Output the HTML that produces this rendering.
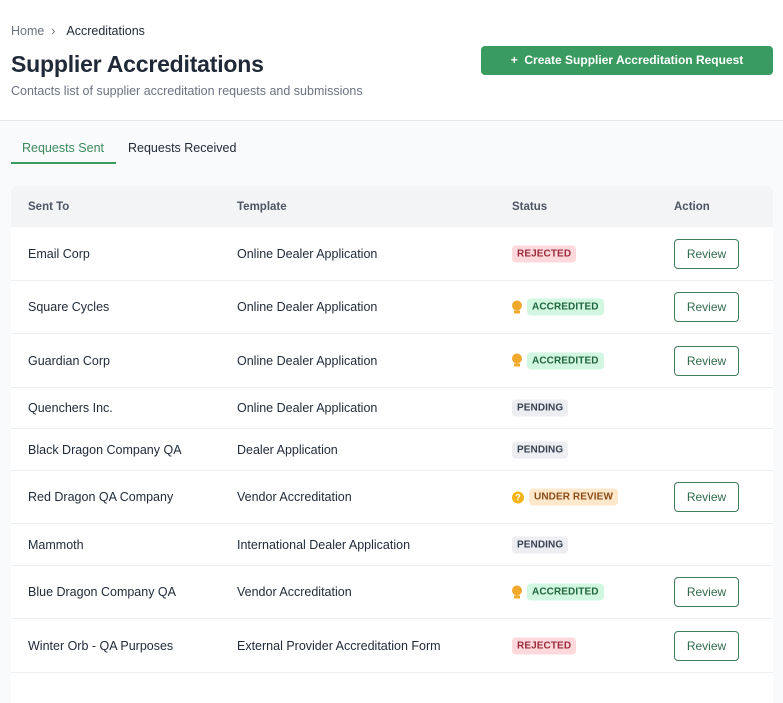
<!DOCTYPE html>
<html><head><style>
*{box-sizing:border-box;margin:0;padding:0}
body{width:783px;height:700px;overflow:hidden;background:#f9fafb;font-family:"Liberation Sans",sans-serif;color:#1f2937;position:relative}
.hdr{position:absolute;left:0;top:0;width:783px;height:121px;background:#fff;border-bottom:1px solid #e5e7eb}
.crumb{position:absolute;left:11px;top:24px;font-size:12.5px;color:#6b7280}
.crumb b{color:#1f2937;font-weight:normal;margin-left:4px}
h1{position:absolute;left:11px;top:51px;font-size:23px;font-weight:bold;color:#1f2937;letter-spacing:-0.2px}
.sub{position:absolute;left:11px;top:84px;font-size:12.5px;color:#6b7280}
.btn{position:absolute;left:481px;top:46px;width:292px;height:29px;background:#3a9b61;border-radius:4px;color:#fff;font-size:12px;font-weight:bold;line-height:29px;text-align:center}
.tab{position:absolute;top:141px;font-size:12.5px}
.ul{position:absolute;left:11px;top:162px;width:105px;height:2px;background:#3a9b61}
.tbl{position:absolute;left:11px;top:186px;width:762px;background:#fff;border-radius:6px 6px 0 0;overflow:hidden}
.row{position:relative;border-bottom:1px solid #eceef1;font-size:12.5px}
.row>div{position:absolute;top:50%;transform:translateY(-50%)}
.th{height:41px;background:#f3f4f6;font-weight:bold;font-size:11.5px;color:#4b5563;border:none}
.c1{left:17px}.c2{left:226px}.c3{left:501px;display:flex;align-items:center}.c4{left:663px}
.bd{font-size:10px;font-weight:bold;padding:3px 5px;border-radius:4px;letter-spacing:.1px}
.rej{background:#fdd8dc;color:#9b2c3b}.acc{background:#d1f7e0;color:#21643e}.pen{background:#eceef1;color:#374151}.und{background:#fde8cc;color:#8a4b14}
.rv{width:65px;height:30px;border:1px solid #3f7d5a;border-radius:4px;color:#2f6b4b;font-size:12px;text-align:center;line-height:28px}
.ic{width:10px;height:14px;margin-right:5px;position:relative}
.ic:before{content:"";position:absolute;left:0;top:0;width:10px;height:10px;border-radius:50%;background:#f0a92c}
.ic:after{content:"";position:absolute;left:2px;top:10px;width:6px;height:3px;background:#f0a92c}
.q{width:12px;height:12px;border-radius:50%;background:#f5b417;color:#fff;font-size:9px;font-weight:bold;text-align:center;line-height:12px;margin-right:5px}
</style></head><body>
<div class="hdr">
<div class="crumb">Home &nbsp;›&nbsp; <b>Accreditations</b></div>
<h1>Supplier Accreditations</h1>
<div class="sub">Contacts list of supplier accreditation requests and submissions</div>
<div class="btn">+&nbsp;&nbsp;Create Supplier Accreditation Request</div>
</div>
<div class="tab" style="left:22px;color:#3a8a5c">Requests Sent</div>
<div class="tab" style="left:128px">Requests Received</div>
<div class="ul"></div>
<div class="tbl">
<div class="row th"><div class="c1">Sent To</div><div class="c2">Template</div><div class="c3">Status</div><div class="c4">Action</div></div>
<div class="row" style="height:54px"><div class="c1">Email Corp</div><div class="c2">Online Dealer Application</div><div class="c3"><span class="bd rej">REJECTED</span></div><div class="c4 rv">Review</div></div>
<div class="row" style="height:53px"><div class="c1">Square Cycles</div><div class="c2">Online Dealer Application</div><div class="c3"><span class="ic"></span><span class="bd acc">ACCREDITED</span></div><div class="c4 rv">Review</div></div>
<div class="row" style="height:54px"><div class="c1">Guardian Corp</div><div class="c2">Online Dealer Application</div><div class="c3"><span class="ic"></span><span class="bd acc">ACCREDITED</span></div><div class="c4 rv">Review</div></div>
<div class="row" style="height:41px"><div class="c1">Quenchers Inc.</div><div class="c2">Online Dealer Application</div><div class="c3"><span class="bd pen">PENDING</span></div></div>
<div class="row" style="height:42px"><div class="c1">Black Dragon Company QA</div><div class="c2">Dealer Application</div><div class="c3"><span class="bd pen">PENDING</span></div></div>
<div class="row" style="height:53px"><div class="c1">Red Dragon QA Company</div><div class="c2">Vendor Accreditation</div><div class="c3"><span class="q">?</span><span class="bd und">UNDER REVIEW</span></div><div class="c4 rv">Review</div></div>
<div class="row" style="height:42px"><div class="c1">Mammoth</div><div class="c2">International Dealer Application</div><div class="c3"><span class="bd pen">PENDING</span></div></div>
<div class="row" style="height:53px"><div class="c1">Blue Dragon Company QA</div><div class="c2">Vendor Accreditation</div><div class="c3"><span class="ic"></span><span class="bd acc">ACCREDITED</span></div><div class="c4 rv">Review</div></div>
<div class="row" style="height:54px"><div class="c1">Winter Orb - QA Purposes</div><div class="c2">External Provider Accreditation Form</div><div class="c3"><span class="bd rej">REJECTED</span></div><div class="c4 rv">Review</div></div>
<div class="row" style="height:30px;border:none"></div>
</div>
</body></html>
